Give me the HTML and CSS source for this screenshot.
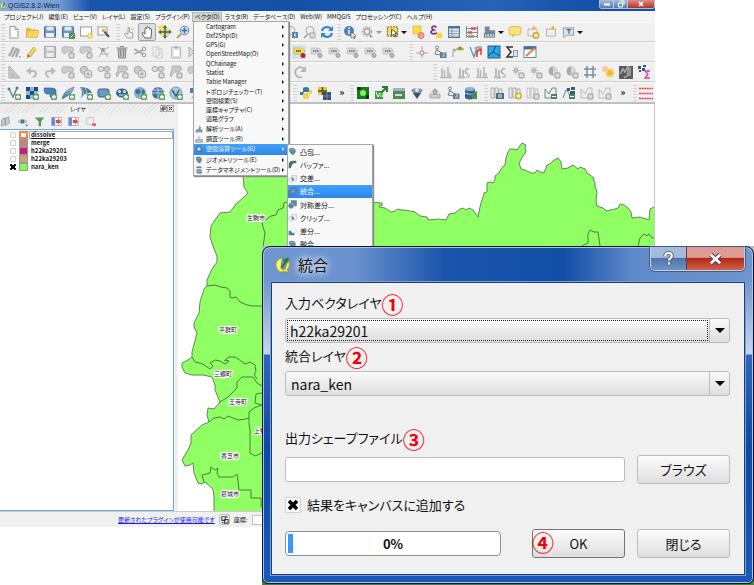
FILE: index.html
```html
<!DOCTYPE html>
<html lang="ja">
<head>
<meta charset="utf-8">
<title>QGIS2.8.2-Wien</title>
<link rel="stylesheet" href="styles.css">
</head>
<body>
<svg class="defs" aria-hidden="true">
  <defs>
    <g id="plus"><rect x="8" y="8" width="6" height="6" rx="1" fill="#5fa65f"/><path d="M11 9v4M9 11h4" stroke="#fff" stroke-width="1.3"/></g>
    <g id="gbadge"><rect x="8" y="8" width="5" height="5" rx="1" fill="#ddd" stroke="#999"/></g>
    <linearGradient id="bar" x1="0" y1="0" x2="0" y2="1"><stop offset="0" stop-color="#a9c4e2"/><stop offset="1" stop-color="#3f6fa5"/></linearGradient>
  </defs>
  <symbol id="new" viewBox="0 0 14 14"><path d="M3 1.500h5l3 3v8.500H3z" fill="#fff" stroke="#999"/><path d="M8 1.500v3h3" fill="none" stroke="#999"/></symbol>
  <symbol id="open" viewBox="0 0 14 14"><path d="M1 12V3h4l1 1.500h6V6" fill="#e8b93a"/><path d="M1 12.500L3 5.500h11L12 12.500z" fill="#fbd45c" stroke="#d9a52c" stroke-width=".6"/></symbol>
  <symbol id="save" viewBox="0 0 14 14"><rect x="1.500" y="1.500" width="11" height="11" rx="1" fill="#6f95bd" stroke="#4f7092"/><rect x="3.500" y="1.500" width="7" height="4" fill="#dfe9f2"/><rect x="3" y="8" width="8" height="4.500" fill="#eee"/></symbol>
  <symbol id="saveas" viewBox="0 0 14 14"><rect x="1.500" y="1.500" width="11" height="11" rx="1" fill="#6f95bd" stroke="#4f7092"/><rect x="3.500" y="1.500" width="7" height="4" fill="#dfe9f2"/><rect x="3" y="8" width="5" height="4.500" fill="#eee"/><rect x="8" y="8" width="6" height="6" fill="#4f8f4f"/><path d="M9.500 12.500l3-3" stroke="#fff"/></symbol>
  <symbol id="compose" viewBox="0 0 14 14"><rect x="1.500" y="2" width="11" height="9" fill="#fff" stroke="#999"/><circle cx="11" cy="11" r="2.800" fill="#f1c637"/><path d="M11 9.500v3M9.500 11h3" stroke="#fff"/></symbol>
  <symbol id="wrench" viewBox="0 0 14 14"><rect x="1" y="2" width="9" height="8" fill="#fff" stroke="#999"/><path d="M7 6l5 6" stroke="#555" stroke-width="2"/><circle cx="6.500" cy="5.500" r="1.800" fill="#d8b34c"/></symbol>
  <symbol id="touch" viewBox="0 0 14 14"><path d="M5 13L2.500 9l1-1L6 9V2.500h1.500V7l3.500 1-.5 5z" fill="#eee" stroke="#999" stroke-width=".9"/><path d="M9 4h3" stroke="#aaa"/></symbol>
  <symbol id="hand" viewBox="0 0 14 14"><path d="M4 13L.8 8.500l1.200-1 2 1.500V3.500q.8-1 1.600 0V2q.8-1 1.600 0v1q.8-1 1.600 0v1.200q.8-1 1.700 0V9l-.7 4z" fill="#fff" stroke="#555" stroke-width=".9" transform="translate(1)"/></symbol>
  <symbol id="pan" viewBox="0 0 14 14"><path d="M0 1l6-1 7 5-3 7-8-1z" fill="#f5dc53"/><path d="M7 2v10M2 7h10" stroke="#345f91" stroke-width="1.500"/><path d="M5 3l2-3 2 3zM5 11l2 3 2-3zM3 5L0 7l3 2zM11 5l3 2-3 2z" fill="#345f91"/></symbol>
  <symbol id="zoom" viewBox="0 0 14 14"><path d="M5 9l-4 4" stroke="#c7a04c" stroke-width="2"/><circle cx="8.500" cy="5.500" r="4.300" fill="#d3e5f4" stroke="#5d87b3"/><path d="M8.500 2.500v6M5.500 5.500h6" stroke="#3c6da5" stroke-width="1.500"/></symbol>
  <symbol id="zoomg" viewBox="0 0 14 14"><path d="M6 9l-4 4" stroke="#999" stroke-width="1.500"/><circle cx="8" cy="5.500" r="4" fill="#eee" stroke="#aaa"/><rect x="8" y="8" width="5" height="5" fill="#d8d8d8" stroke="#aaa"/></symbol>
  <symbol id="zoomb" viewBox="0 0 14 14"><circle cx="7" cy="5.500" r="4" fill="#eee" stroke="#aaa"/><rect x="8" y="7" width="6" height="6" fill="#5684b5"/><path d="M12 8.500l-2 1.500 2 1.500" stroke="#fff" fill="none"/></symbol>
  <symbol id="refresh" viewBox="0 0 14 14"><path d="M2 6a5 4.500 0 0 1 9-2M12 8a5 4.500 0 0 1-9 2" fill="none" stroke="#3b84cf" stroke-width="2.200"/><path d="M13 1v5H8zM1 13V8h5z" fill="#3b84cf"/></symbol>
  <symbol id="info" viewBox="0 0 14 14"><circle cx="6" cy="6" r="5" fill="#4d82b6"/><path d="M6 5v4M6 2.500v1.500" stroke="#fff" stroke-width="1.500"/><path d="M8 7l5 4-2 .3 1 2-1 .5-1-2-2 1z" fill="#fff" stroke="#333" stroke-width=".6"/></symbol>
  <symbol id="gear" viewBox="0 0 14 14"><circle cx="6.500" cy="6.500" r="4.500" fill="none" stroke="#bbb" stroke-width="2.500" stroke-dasharray="2 1.200"/><circle cx="6.500" cy="6.500" r="3" fill="none" stroke="#aaa" stroke-width="1.500"/><path d="M9 9l4 3-3 1z" fill="#999"/></symbol>
  <symbol id="select" viewBox="0 0 14 14"><rect x="1.500" y="1.500" width="11" height="10" fill="#f8df4d" stroke="#555" stroke-dasharray="2 1"/><path d="M6 4l6 4.500-2.500.3 1.500 3-1.300.7-1.500-3L6 11z" fill="#fff" stroke="#222" stroke-width=".8"/></symbol>
  <symbol id="desel" viewBox="0 0 14 14"><rect x="2" y="1" width="8" height="8" fill="#f8df3d" stroke="#d9b930" stroke-width=".7"/><circle cx="10" cy="10.500" r="3" fill="#f7d5d1" stroke="#da5b50"/><path d="M8.500 9l3 3m0-3l-3 3" stroke="#da5b50"/></symbol>
  <symbol id="eps" viewBox="0 0 14 14"><path d="M8 8h5v5H7z" fill="#f6d835"/><path d="M7.500 2.500C5-.5 0 3 5 5-.5 6 2 10.500 8 8" fill="none" stroke="#7c3c84" stroke-width="1.700"/></symbol>
  <symbol id="table" viewBox="0 0 14 14"><rect x="1.500" y="1.500" width="11" height="11" fill="#e8f0f6" stroke="#53748f"/><path d="M1 2.500h12" stroke="#53748f" stroke-width="2"/><path d="M1.500 6h11M1.500 8.500h11M1.500 11h11M5 3v9" stroke="#7d9ab2"/></symbol>
  <symbol id="abacus" viewBox="0 0 14 14"><path d="M1.500 1v12M12.500 1v12M1 3.500h12M1 7.500h12M1 11.500h12" stroke="#888" fill="none"/><path d="M6 3.500h5M3 7.500h4" stroke="#d9515c" stroke-width="2.500"/><path d="M3 11.500h6" stroke="#79a37c" stroke-width="2.500"/></symbol>
  <symbol id="measure" viewBox="0 0 14 14"><path d="M2 1h5v4h6v3H2z" fill="#73879a"/><rect x="1.500" y="8.500" width="11" height="4" fill="#c8d5df" stroke="#657a8c"/><path d="M4 9v2m3-2v2m3-2v2" stroke="#555"/></symbol>
  <symbol id="bubble" viewBox="0 0 14 14"><rect x="1" y="1.500" width="12" height="8.500" rx="2.500" fill="#f9e27a" stroke="#d0b44c" stroke-width=".8"/><path d="M4 10v3l4-3z" fill="#e6c858"/></symbol>
  <symbol id="bmnew" viewBox="0 0 14 14"><path d="M2 4h9v7H2z" fill="#eee" stroke="#b5b5b5"/><path d="M8 1l1.500 3H6.500z" fill="#edb72d" stroke="#edb72d"/><circle cx="10" cy="10.500" r="2.700" fill="#f9eec5" stroke="#d0a62f" stroke-width="1.500"/></symbol>
  <symbol id="bm" viewBox="0 0 14 14"><path d="M2.500 4h9v7h-9z" fill="#eee" stroke="#b5b5b5"/><path d="M9 1l1.500 3h-3z" fill="#edb72d" stroke="#edb72d"/></symbol>
  <symbol id="note" viewBox="0 0 14 14"><path d="M1.500 2.500h11v8H5L2 13V10.500h-.5z" fill="#dce4e9" stroke="#8899a5"/><path d="M5 4.500h5M7.500 4.500V9" stroke="#465f72" stroke-width="1.200"/></symbol>
  <symbol id="pencils" viewBox="0 0 14 14"><path d="M2 11L7 2M5 12l5-9M9 12l3-8" stroke="#aaa" stroke-width="2.300"/><path d="M12 12h2" stroke="#888"/></symbol>
  <symbol id="pencil" viewBox="0 0 14 14"><path d="M4 11l6-8" stroke="#c9a637" stroke-width="4"/><path d="M4 11l6-8" stroke="#f5dc62" stroke-width="2.300"/><path d="M2 13l.5-4 3 2.300z" fill="#776"/></symbol>
  <symbol id="saveg" viewBox="0 0 14 14"><rect x="1.500" y="1.500" width="11" height="11" fill="#c4c4c4" stroke="#aaa"/><rect x="3.500" y="2" width="7" height="3.500" fill="#eee"/><rect x="3.500" y="8" width="7" height="4" fill="#eee"/></symbol>
  <symbol id="blob" viewBox="0 0 14 14"><path d="M1 5c0-5 4-3 7-3 5-1 6 4 3 5-3 1-3-2-5 0-3 3-5 1-5-2z" fill="#ccc" stroke="#aaa" stroke-width=".8"/><use href="#gbadge"/></symbol>
  <symbol id="rings" viewBox="0 0 14 14"><ellipse cx="4" cy="4" rx="3" ry="2.500" fill="#ddd" stroke="#aaa"/><ellipse cx="10" cy="4" rx="3" ry="2.500" fill="#d0d0d0" stroke="#aaa"/><use href="#gbadge"/></symbol>
  <symbol id="merge" viewBox="0 0 14 14"><path d="M3 1h8l2 3-3 3H5l-3 5-1-3 2-4z" fill="#c8c8c8" stroke="#a8a8a8" stroke-width=".8"/><use href="#gbadge"/></symbol>
  <symbol id="circles" viewBox="0 0 14 14"><circle cx="5" cy="5" r="3.800" fill="#ccc" stroke="#aaa"/><circle cx="9" cy="9" r="4" fill="#ddd" stroke="#aaa"/><circle cx="9" cy="9" r="1.500" fill="#aaa"/></symbol>
  <symbol id="node" viewBox="0 0 14 14"><path d="M1 2l5 3 6-3M6 5L2 12M6 5l5 7M4 9h8" stroke="#aaa" fill="none"/><circle cx="6" cy="5" r="2" fill="#999"/></symbol>
  <symbol id="trash" viewBox="0 0 14 14"><path d="M3 4h8l-.7 9H3.700z" fill="#bbb" stroke="#888"/><path d="M1.500 3h11M5 1.500h4M5.500 5v6.500M8.500 5v6.500" stroke="#888"/></symbol>
  <symbol id="cut" viewBox="0 0 14 14"><path d="M1 4l9 5M1 9l9-4" stroke="#aaa" stroke-width="1.500"/><circle cx="11" cy="4" r="1.800" fill="none" stroke="#999"/><circle cx="11" cy="10" r="1.800" fill="none" stroke="#999"/></symbol>
  <symbol id="copy" viewBox="0 0 14 14"><path d="M2 2h6v9H2zM5 4h6v9H5z" fill="#f7f7f7" stroke="#c8c8c8"/><path d="M7 7h3M7 9h3" stroke="#ccc"/></symbol>
  <symbol id="paste" viewBox="0 0 14 14"><path d="M2.500 2h9v11h-9z" fill="#e5e5e5" stroke="#bbb"/><path d="M5 1.500h4v2H5z" fill="#aaa"/><path d="M5 5h5v6H5z" fill="#fff"/></symbol>
  <symbol id="tri" viewBox="0 0 14 14"><path d="M2 2v10L12 2v10L2 2z" fill="#ddd" stroke="#aaa"/></symbol>
  <symbol id="abc" viewBox="0 0 14 14"><rect width="14" height="14" fill="#cfe2f5"/><path d="M2 3h8l3 3-3 3H2z" fill="#f6dd5b" stroke="#c8ad39" stroke-width=".7"/><path d="M4 6h5" stroke="#665d2b" stroke-dasharray="1.500 .6" stroke-width="2"/><circle cx="11" cy="10.500" r="2.500" fill="#bd2532"/></symbol>
  <symbol id="abcg" viewBox="0 0 14 14"><path d="M1 3h8l3 3-3 3H1z" fill="#d7d7d7" stroke="#bbb" stroke-width=".7"/><path d="M3 6h6" stroke="#888" stroke-dasharray="1.500 .6" stroke-width="2"/><circle cx="10" cy="10.500" r="2" fill="#bbb" stroke="#999"/></symbol>
  <symbol id="target" viewBox="0 0 14 14"><path d="M7 1v12M1 8h12" stroke="#aaa"/><circle cx="7" cy="8" r="2" fill="#fff" stroke="#b46c6c"/></symbol>
  <symbol id="link" viewBox="0 0 14 14"><circle cx="4" cy="2.500" r="1.500" fill="none" stroke="#888"/><path d="M4 4L2 9l6 1M4 5l5 3" stroke="#777" fill="none"/><rect x="7" y="7.500" width="6.500" height="5.500" fill="#5d7f96"/><path d="M9 11h3M10 9h2" stroke="#dde"/></symbol>
  <symbol id="lamp" viewBox="0 0 14 14"><path d="M2 12V6l8-4" stroke="#999" fill="none"/><path d="M5 4h8" stroke="#c8bd48" stroke-width="2.500"/><circle cx="9" cy="3.500" r="2" fill="#8a9554"/><path d="M2 4l3 2" stroke="#aaa" stroke-width="2"/></symbol>
  <symbol id="vflag" viewBox="0 0 14 14"><path d="M1 2l4 10 3-10h5" stroke="#558ab5" fill="none" stroke-width="1.200"/><path d="M5 3h6l-4 8" stroke="#999" fill="none"/><path d="M8 12V6l4-2v6" stroke="#d53b3b" fill="none" stroke-width="1.500"/></symbol>
  <symbol id="bluenode" viewBox="0 0 14 14"><rect x="1" y="1" width="12" height="12" fill="#2ba7ec" stroke="#2c5e82"/><path d="M9 1L6 7l7 4M6 7l-5 4" stroke="#124b77" fill="none"/></symbol>
  <symbol id="sigma" viewBox="0 0 14 14"><path d="M8 2H2l4 5-4 5h6" fill="none" stroke="#333" stroke-width="1.500"/><rect x="8.500" y="5.500" width="4" height="6" fill="#dfe5f5" stroke="#8894b0"/></symbol>
  <symbol id="winpen" viewBox="0 0 14 14"><rect x="1" y="1.500" width="12" height="11" fill="#fff" stroke="#5c89c1"/><path d="M1 3h12" stroke="#3f6fae" stroke-width="3"/><path d="M3 11L12 3" stroke="#e88a37" stroke-width="2.300"/></symbol>
  <symbol id="square" viewBox="0 0 14 14"><path d="M2 1v12h11zM5 8v3h3z" fill="#ccc" fill-rule="evenodd" stroke="#aaa"/></symbol>
  <symbol id="undo" viewBox="0 0 14 14"><path d="M3 6h5c4 0 4 5 0 6" fill="none" stroke="#bbb" stroke-width="2"/><path d="M1 6l5-4v8z" fill="#bbb"/></symbol>
  <symbol id="redo" viewBox="0 0 14 14"><path d="M11 6H6c-4 0-4 5 0 6" fill="none" stroke="#bbb" stroke-width="2"/><path d="M13 6L8 2v8z" fill="#bbb"/></symbol>
  <symbol id="rotate" viewBox="0 0 14 14"><path d="M11 4a5 5 0 1 0-2 8" fill="none" stroke="#b5b5b5" stroke-width="1.700"/><path d="M13 1v6H7z" fill="#b5b5b5"/></symbol>
  <symbol id="hist" viewBox="0 0 14 14"><path d="M1 12.500h12M3 12V3M5.500 12V5M9 12V2M11 12V8" stroke="#bbb" stroke-width="1.700"/></symbol>
  <symbol id="hist2" viewBox="0 0 14 14"><path d="M1 12.500h7M3 12V3M6 12V5" stroke="#bbb" stroke-width="2"/><path d="M12 4c-4-1-5 4-1 5" fill="none" stroke="#aaa" stroke-width="1.500"/><path d="M9 12h3V9" stroke="#aaa" fill="none"/></symbol>
  <symbol id="sun" viewBox="0 0 14 14"><path d="M5 1v9M1 5.500h9M2 2l6 6M8 2L2 8" stroke="#c4c4c4"/><circle cx="5" cy="5.500" r="2.500" fill="#bbb"/><use href="#gbadge"/></symbol>
  <symbol id="ball" viewBox="0 0 14 14"><circle cx="6" cy="6" r="4.500" fill="#aaa"/><path d="M6 1.500a4.500 4.500 0 0 1 0 9z" fill="#d6d6d6"/><use href="#gbadge"/></symbol>
  <symbol id="gridic" viewBox="0 0 14 14"><path d="M4 1v12M10 1v12M1 4h12M1 10h12" stroke="#77909d" stroke-width="1.500"/></symbol>
  <symbol id="heat" viewBox="0 0 14 14"><circle cx="4" cy="4" r="3" fill="#f8c4a1"/><circle cx="9" cy="8" r="4.500" fill="#f5d45f"/><circle cx="9" cy="8" r="2.500" fill="#f1b13d"/></symbol>
  <symbol id="raster" viewBox="0 0 14 14"><rect width="14" height="13" y="1" fill="#5b5b5b"/><path d="M1 9l3-5 2 3 3-6v9l-4 3M11 2v9" stroke="#aaa" stroke-width="1.500" fill="none"/></symbol>
  <symbol id="zonal" viewBox="0 0 14 14"><path d="M1 1h3v3H1zM5 3h3v3H5zM2 5h2v2H2zM6 0h3v2H6z" fill="#2e5575"/><path d="M13 6H8l3 3.500L8 13h5" fill="none" stroke="#c4479e" stroke-width="1.300"/></symbol>
  <symbol id="vplus" viewBox="0 0 14 14"><path d="M2 3l4 8 4-9" stroke="#57789a" fill="none" stroke-width="1.300"/><circle cx="2" cy="3" r="1.500" fill="#57789a"/><circle cx="10" cy="2" r="1.500" fill="#57789a"/><use href="#plus"/></symbol>
  <symbol id="checker" viewBox="0 0 14 14"><rect x="1" y="1" width="12" height="12" fill="#8db8df"/><path d="M1 1h4v4H1zM9 1h4v4H9zM5 5h4v4H5zM1 9h4v4H1z" fill="#1f4d7b"/><use href="#plus"/></symbol>
  <symbol id="elephant" viewBox="0 0 14 14"><path d="M1 2h8q4 0 4 3v3H9v3H7V8H4Q1 8 1 2z" fill="#4681b7" stroke="#2f5f8e" stroke-width=".6"/><use href="#plus"/></symbol>
  <symbol id="feather" viewBox="0 0 14 14"><path d="M1 13Q3 4 13 1 12 8 1 13z" fill="url(#bar)" stroke="#4b7298" stroke-width=".7"/><use href="#plus"/></symbol>
  <symbol id="fan" viewBox="0 0 14 14"><path d="M1 1q10 0 12 6-8-1-12 6 4-6 0-12z" fill="#49799f"/><path d="M2 2q5 5 1 9M6 2q3 3 1 7" stroke="#9fc2dc" fill="none"/><use href="#plus"/></symbol>
  <symbol id="box" viewBox="0 0 14 14"><rect x="1" y="3" width="11" height="8" rx="2" fill="#6b98c8" stroke="#365f8e"/><use href="#plus"/></symbol>
  <symbol id="oval" viewBox="0 0 14 14"><ellipse cx="7" cy="7" rx="6" ry="4.500" fill="#356799"/><circle cx="4.500" cy="5.500" r="1.500" fill="#d9e7f3"/><circle cx="9.500" cy="5.500" r="1.500" fill="#d9e7f3"/><path d="M4 9h4" stroke="#d9e7f3"/><use href="#plus"/></symbol>
  <symbol id="globe" viewBox="0 0 14 14"><circle cx="7" cy="7" r="6" fill="#83aed1"/><path d="M2 4l4-1 2 3-3 3-2-2zM9 3l3 2-1 4-2-1z" fill="#3e709c"/><use href="#plus"/></symbol>
  <symbol id="globe2" viewBox="0 0 14 14"><circle cx="7" cy="7" r="6" fill="#44749e"/><path d="M1 7h12M2 4h10M7 1v12" stroke="#bed4e5"/><use href="#plus"/></symbol>
  <symbol id="globev" viewBox="0 0 14 14"><circle cx="7" cy="7" r="6" fill="#a9c7df" stroke="#7596b1"/><path d="M3 4l4 6 3-6" fill="none" stroke="#315d85" stroke-width="1.500"/><use href="#plus"/></symbol>
  <symbol id="comma" viewBox="0 0 14 14"><path d="M3 13q5-3 4-6H3V2h8q2 8-8 11z" fill="#4b80b2"/></symbol>
  <symbol id="python" viewBox="0 0 14 14"><path d="M4 6V2q3-2 6 0v4H5L4 9H1V6z" fill="#3a75ab"/><path d="M10 8v4q-3 2-6 0V9l1-2h5V4h3v4z" fill="#f5d142"/></symbol>
  <symbol id="ygrid" viewBox="0 0 14 14"><path d="M1 1h9v8H1z" fill="#e4c93e"/><path d="M5.500 1v8M1 5h9" stroke="#554c1b" stroke-width="1.500"/><path d="M6 6h8v8H6z" fill="#34516f"/><path d="M10 6v8M6 10h8" stroke="#718daa"/></symbol>
  <symbol id="bug" viewBox="0 0 14 14"><rect x="1" y="1" width="12" height="12" fill="#147a1f"/><path d="M1 1h4v3H1zM10 9h3v4h-3z" fill="#083c11"/><circle cx="7" cy="7" r="3" fill="#80ef5c"/></symbol>
  <symbol id="gv" viewBox="0 0 14 14"><path d="M1 5h8v8H1z" fill="#3a9b36"/><path d="M2 6l2 5 2-4h3M6 10h3" stroke="#fff" fill="none"/><path d="M7 7l6-6M8 1h5v5" fill="none" stroke="#277a27" stroke-width="2"/></symbol>
  <symbol id="land" viewBox="0 0 14 14"><rect x="1" y="2" width="12" height="11" fill="#518c4f"/><path d="M1 2h12v3H1z" fill="#9ab4c4"/><path d="M3 8h7v2H3z" fill="#d6dfd0"/></symbol>
  <symbol id="shield" viewBox="0 0 14 14"><path d="M1 4q6-4 12 0l-6 8z" fill="#8392a2"/><path d="M3 7h8l-4 6z" fill="#355473"/><circle cx="7" cy="4" r="2" fill="#dce5ed"/></symbol>
  <symbol id="cloud" viewBox="0 0 14 14"><path d="M2 8h10v4H2z" fill="#ccc" stroke="#aaa"/><path d="M7 2l4 4H3zM5 6h4v3H5z" fill="#aaa"/></symbol>
  <symbol id="db" viewBox="0 0 14 14"><path d="M1 3v9q5 3 10 0V3z" fill="#34618e"/><ellipse cx="6" cy="3" rx="5" ry="2" fill="#8db1d3"/><path d="M1 7q5 3 10 0" stroke="#b7cfe3" fill="none"/><path d="M7 8l6-3v8H8z" fill="#4a8a58"/></symbol>
  <symbol id="mapb" viewBox="0 0 14 14"><path d="M1 2h3v10H1zM5 2h3v10H5zM9 3h3v9H9z" fill="#eee" stroke="#aaa"/><rect x="6" y="7" width="8" height="6" fill="#4b7180"/><path d="M8 9h4M8 11h4" stroke="#dee"/></symbol>
  <symbol id="mapy" viewBox="0 0 14 14"><path d="M1 2h3v10H1zM5 2h3v10H5zM9 3h3v9H9z" fill="#eee" stroke="#aaa"/><circle cx="10.500" cy="10" r="2.700" fill="#f8edbb" stroke="#d0ac35" stroke-width="1.500"/></symbol>
  <symbol id="mapg" viewBox="0 0 14 14"><path d="M1 2h3v10H1zM5 2h3v10H5zM9 3h3v9H9z" fill="#eee" stroke="#c3c3c3"/><use href="#gbadge"/></symbol>
  <symbol id="net" viewBox="0 0 14 14"><path d="M1 12V3l4 5 3-6h4v10z" fill="#e7eef1" stroke="#71889a"/><rect x="7" y="8" width="6" height="5" fill="#4e8267"/><path d="M8 10.500h4" stroke="#fff"/></symbol>
  <symbol id="net2" viewBox="0 0 14 14"><path d="M1 12l3-8h1l3 6" fill="none" stroke="#71889a"/><path d="M5 2h3v3H5zM9 1h4v3H9zM8 5h5v3H8z" fill="#315d70"/><rect x="7" y="8" width="6" height="5" fill="#4e8267"/><path d="M8 10.500h4" stroke="#fff"/></symbol>
  <symbol id="netg" viewBox="0 0 14 14"><path d="M1 12V3l4 5 3-6h4v10z" fill="#eee" stroke="#bbb"/><use href="#gbadge"/></symbol>
  <symbol id="lines" viewBox="0 0 14 14"><path d="M0 2.500h14M0 7.500h14M0 12.500h14" stroke="#e34553" stroke-width="1.500" stroke-dasharray="2 .6"/></symbol>
  <symbol id="layers" viewBox="0 0 14 14"><path d="M2 5l4-3v9l-4 2zM7 3l4-2 1 8-5 3z" fill="#ccc" stroke="#8795a0"/></symbol>
  <symbol id="eye" viewBox="0 0 14 14"><path d="M1 7q6-5 12 0-6 5-12 0z" fill="#ccd7e0" stroke="#9caab5"/><circle cx="7" cy="7" r="2.500" fill="#507899"/><path d="M11 11h3l-1.500 2z" fill="#222"/></symbol>
  <symbol id="funnel" viewBox="0 0 14 14"><path d="M1 2h12L9 7v6H6V7z" fill="#4e9b59"/><path d="M2 2.500h10" stroke="#85c486"/></symbol>
  <symbol id="expand" viewBox="0 0 14 14"><rect x="1" y="2" width="12" height="10" fill="#fff" stroke="#8fa7d0"/><rect x="1" y="2" width="4" height="10" fill="#5c8be0"/><path d="M6 5h3V3l4 4-4 4V9H6z" fill="#e14f42"/></symbol>
  <symbol id="remove" viewBox="0 0 14 14"><rect x="2" y="2" width="9" height="9" rx="1" fill="#eee" stroke="#bbb"/><path d="M9 11h5" stroke="#e0545c" stroke-width="3"/></symbol>
  <symbol id="geo" viewBox="0 0 14 14"><path d="M1 3q5-4 10 0 3 6-3 10-6-3-7-10z" fill="#678ba2"/><path d="M3 4h6" stroke="#9db8c8"/></symbol>
  <symbol id="buffer" viewBox="0 0 14 14"><path d="M1 13V6Q2 1 8 1h5v4H9Q6 6 6 9l-2 4z" fill="#51717a"/></symbol>
  <symbol id="inter" viewBox="0 0 14 14"><circle cx="5" cy="9" r="4" fill="#eee" stroke="#bcc8cf"/><rect x="6" y="2" width="7" height="8" fill="#e9eef1" stroke="#bcc8cf"/><path d="M6 5q4 1 3 5H6z" fill="#517b9b"/></symbol>
  <symbol id="union" viewBox="0 0 14 14"><path d="M5 1h8v8H9q-1 4-5 4-4-2-3-5 1-3 4-3z" fill="#6688a2" stroke="#4b6e89"/><path d="M6 5q4 1 3 4" fill="none" stroke="#b9cbd7"/></symbol>
  <symbol id="diff" viewBox="0 0 14 14"><path d="M1 6h4q0 4 5 3v4H1z" fill="#557c98"/><circle cx="9" cy="5" r="4" fill="#f8fafb" stroke="#cdd7dd"/></symbol>
  <symbol id="analysis" viewBox="0 0 14 14"><path d="M7 1l4 4-2 3h4v5H1V9l6-3z" fill="#708c9b"/><path d="M3 11h8M7 2v3" stroke="#d4dfe5"/></symbol>
  <symbol id="survey" viewBox="0 0 14 14"><path d="M7 1v8M4 5h6M1 8h12v5H1z" fill="#9cafb9" stroke="#8ba0ab"/><path d="M3 11h8" stroke="#eee"/></symbol>
  <symbol id="cog" viewBox="0 0 14 14"><circle cx="7" cy="7" r="4.500" fill="none" stroke="#566d84" stroke-width="3" stroke-dasharray="2.600 .9"/><circle cx="7" cy="7" r="3.500" fill="#cdd7dd" stroke="#667e91"/></symbol>
  <symbol id="data" viewBox="0 0 14 14"><path d="M1 1h9l3 3H4zM1 6h9l3 3H4zM1 10h11v3H4z" fill="#5f8196"/></symbol>
  <symbol id="qgis" viewBox="0 0 18 18"><path d="M3 13Q0 7 4 4 6 1 9 2l-1 5q-1 4 1 7l3-1 1-5 3-3q2 5-2 9l2 3-5-1q-5 2-8-2z" fill="#f0ea5b" stroke="#858c2e" stroke-width=".8"/><path d="M5 12q-1-5 2-8" fill="none" stroke="#fffcc0" stroke-width="1.500"/><path d="M15 1q2 2-2 6l-5 6-1-2 4-5-2-2z" fill="#267b3b"/></symbol>
</svg>

<main class="window">
  <header class="titlebar">
    <svg class="logo"><use href="#qgis"/></svg>
    <h1>QGIS2.8.2-Wien</h1>
    <div class="winctl"><button aria-label="最小化"><svg viewBox="0 0 10 8"><path d="M2 4.500h6" stroke="#fff" stroke-width="2"/></svg></button><button aria-label="最大化"><svg viewBox="0 0 10 8"><path d="M4 1h4v4M2.500 3h4v4h-4z" fill="none" stroke="#fff"/></svg></button><button class="x" aria-label="閉じる"><svg viewBox="0 0 10 8"><path d="M3 2l4 4m0-4L3 6" stroke="#fff" stroke-width="1.600"/></svg></button></div>
  </header>
  <nav class="menubar">
    <button>プロジェクト(J)</button><button>編集(E)</button><button>ビュー(V)</button><button>レイヤ(L)</button><button>設定(S)</button><button>プラグイン(P)</button><button class="open">ベクタ(O)</button><button>ラスタ(R)</button><button>データベース(D)</button><button>Web(W)</button><button>MMQGIS</button><button>プロセッシング(C)</button><button>ヘルプ(H)</button>
  </nav>

  <div class="toolbar row1">
    <div class="group"><button><svg><use href="#new"/></svg></button><button><svg><use href="#open"/></svg></button><button><svg><use href="#save"/></svg></button><button><svg><use href="#saveas"/></svg></button><button><svg><use href="#compose"/></svg></button><button><svg><use href="#wrench"/></svg></button></div>
    <div class="group"><button><svg><use href="#touch"/></svg></button><button class="pressed"><svg><use href="#hand"/></svg></button><button><svg><use href="#pan"/></svg></button><button><svg><use href="#zoom"/></svg></button><button><svg><use href="#zoom"/></svg></button><button><svg><use href="#zoom"/></svg></button><button><svg><use href="#zoom"/></svg></button><button><svg><use href="#zoom"/></svg></button><button><svg><use href="#zoomb"/></svg></button><button><svg><use href="#zoomb"/></svg></button><button><svg><use href="#zoomg"/></svg></button><button><svg><use href="#refresh"/></svg></button></div>
    <div class="group"><button><svg><use href="#info"/></svg></button><button class="drop dim"><svg><use href="#gear"/></svg></button><button class="drop"><svg><use href="#select"/></svg></button><button><svg><use href="#desel"/></svg></button><button><svg><use href="#eps"/></svg></button><button><svg><use href="#table"/></svg></button><button><svg><use href="#abacus"/></svg></button><button class="drop"><svg><use href="#measure"/></svg></button><button><svg><use href="#bubble"/></svg></button><button><svg><use href="#bmnew"/></svg></button><button><svg><use href="#bm"/></svg></button><button class="drop"><svg><use href="#note"/></svg></button></div>
  </div>
  <div class="toolbar row2">
    <div class="group"><button><svg><use href="#pencils"/></svg></button><button><svg><use href="#pencil"/></svg></button><button><svg><use href="#saveg"/></svg></button><button><svg><use href="#blob"/></svg></button><button><svg><use href="#blob"/></svg></button><button><svg><use href="#node"/></svg></button><button><svg><use href="#trash"/></svg></button><button><svg><use href="#cut"/></svg></button><button><svg><use href="#copy"/></svg></button><button><svg><use href="#paste"/></svg></button><button><svg><use href="#tri"/></svg></button></div>
    <div class="group"><button><svg><use href="#abc"/></svg></button><button><svg><use href="#abcg"/></svg></button><button><svg><use href="#abcg"/></svg></button><button><svg><use href="#abcg"/></svg></button><button><svg><use href="#abcg"/></svg></button><button><svg><use href="#abcg"/></svg></button></div>
    <div class="group"><button><svg><use href="#target"/></svg></button><button><svg><use href="#link"/></svg></button><button><svg><use href="#lamp"/></svg></button><button><svg><use href="#vflag"/></svg></button><button><svg><use href="#bluenode"/></svg></button><button><svg><use href="#sigma"/></svg></button><button><svg><use href="#winpen"/></svg></button></div>
  </div>
  <div class="toolbar row3">
    <div class="group"><button><svg><use href="#square"/></svg></button><button><svg><use href="#undo"/></svg></button><button><svg><use href="#redo"/></svg></button><button><svg><use href="#blob"/></svg></button><button><svg><use href="#circles"/></svg></button><button><svg><use href="#rings"/></svg></button><button><svg><use href="#merge"/></svg></button><button><svg><use href="#circles"/></svg></button><button><svg><use href="#rings"/></svg></button><button><svg><use href="#merge"/></svg></button><button><svg><use href="#blob"/></svg></button></div>
    <div class="group plain"><button><svg><use href="#rotate"/></svg></button></div>
    <div class="group"><button><svg><use href="#hist"/></svg></button><button><svg><use href="#hist2"/></svg></button><button><svg><use href="#hist"/></svg></button><button><svg><use href="#hist2"/></svg></button><button><svg><use href="#sun"/></svg></button><button><svg><use href="#sun"/></svg></button><button><svg><use href="#ball"/></svg></button><button><svg><use href="#ball"/></svg></button><button><svg><use href="#gridic"/></svg></button><button><svg><use href="#heat"/></svg></button><button><svg><use href="#raster"/></svg></button><button><svg><use href="#zonal"/></svg></button></div>
  </div>
  <div class="toolbar row4">
    <div class="group"><button><svg><use href="#vplus"/></svg></button><button><svg><use href="#checker"/></svg></button><button><svg><use href="#elephant"/></svg></button><button><svg><use href="#feather"/></svg></button><button><svg><use href="#fan"/></svg></button><button><svg><use href="#box"/></svg></button><button><svg><use href="#oval"/></svg></button><button><svg><use href="#globe"/></svg></button><button><svg><use href="#globe2"/></svg></button><button><svg><use href="#globev"/></svg></button><button><svg><use href="#comma"/></svg></button></div>
    <div class="group"><button><svg><use href="#python"/></svg></button><button><svg><use href="#ygrid"/></svg></button><button class="more">»</button></div>
    <div class="group"><button><svg><use href="#bug"/></svg></button><button><svg><use href="#gv"/></svg></button><button><svg><use href="#land"/></svg></button><button><svg><use href="#shield"/></svg></button><button><svg><use href="#cloud"/></svg></button><button><svg><use href="#link"/></svg></button><button><svg><use href="#db"/></svg></button></div>
    <div class="group"><button><svg><use href="#mapb"/></svg></button><button><svg><use href="#mapy"/></svg></button><button><svg><use href="#mapg"/></svg></button><i class="sep"></i><button><svg><use href="#net"/></svg></button><button><svg><use href="#net2"/></svg></button><button><svg><use href="#netg"/></svg></button><button><svg><use href="#netg"/></svg></button><button class="more">»</button></div>
    <div class="group"><button><svg><use href="#lines"/></svg></button></div>
  </div>

  <div class="work">
    <aside class="dock">
      <div class="dockhead"><h2>レイヤ</h2><div class="dockctl"><button aria-label="フロート"><svg viewBox="0 0 6 6"><path d="M2 1h3v3H2zM1 2.500h2.500V5H1z" fill="none" stroke="#333" stroke-width=".9"/></svg></button><button aria-label="閉じる"><svg viewBox="0 0 6 6"><path d="M1 1l4 4m0-4L1 5" stroke="#222" stroke-width="1.200"/></svg></button></div></div>
      <div class="docktools"><button><svg><use href="#layers"/></svg></button><button><svg><use href="#eye"/></svg></button><button><svg><use href="#funnel"/></svg></button><button><svg><use href="#expand"/></svg></button><button><svg><use href="#expand"/></svg></button><button><svg><use href="#remove"/></svg></button></div>
      <ul class="layers">
        <li><input type="checkbox" id="l1"><i class="sw hollow"></i><label for="l1" class="current">dissolve</label></li>
        <li><input type="checkbox" id="l2"><i class="sw brown"></i><label for="l2">merge</label></li>
        <li><input type="checkbox" id="l3"><i class="sw pink"></i><label for="l3">h22ka29201</label></li>
        <li><input type="checkbox" id="l4"><i class="sw tan"></i><label for="l4">h22ka29203</label></li>
        <li><input type="checkbox" id="l5" checked><i class="sw green"></i><label for="l5">nara_ken</label></li>
      </ul>
    </aside>
    <section class="canvas">
      <svg class="map" viewBox="178 104 476 407" preserveAspectRatio="xMinYMin slice">
        <path class="area" d="M243 160v15l1 12 4 6-5 5-6 5-7 9-10 1-5 7-4 6-1 11 4 12 3 7v6l-5 7-5 11v6l-3 3-4 13-1 11-5 10v4l3 6-5 19v5l-4 3-6 3v4l3 6 7 2 11 0 9 2 3 8v5l5 12-6 7-6-1-1 7 2 7-7 3-11 10v8l-3 7-6 10 3 6 5-1 3-2 1 10 4 10 4 1 3-2 8 7 1 8v20H660V206L654 207 650 209 649 220 640 217 632 218 631 212 628 208 624 205 620 204 618 208 615 209 606 211 603 208 597 206 596 200 597 192 595 186 595 182 593 180 594 178 590 175 587 173 585 169 580 167 578 169 573 165 568 168 562 169 561 162 558 158 554 160 550 164 547 165 544 173 540 172 537 170 535 173 531 173 525 170 521 169 519 163 523 156 526 152 525 148 526 145 522 143 519 147 517 150 513 149 510 149 508 152 506 158 505 165 501 169 499 173 495 176 495 180 493 183 490 182 487 183 487 192 484 193 483 197 481 203 480 207 478 217 473 210 469 208 466 210 463 208 460 209 455 213 449 214 446 220 438 219 428 220 427 217 420 216 415 212 405 210 401 210 398 209 395 211 391 212 385 208 379 207 380 205 382 206 382 203 368 202V160z"/>
        <path class="edge" d="M287 202l-3 1-1 5-5 2-2 5-5 1-4 3-5 3 1 5 2 6-1 7-1 7M207 286l8-1 6 2 6 1 3 3 0 6 2 1 4-1 4 5 7 3 6 1h9M192 357l3 5 8 2 7 5 3-3-3-3 5-3 5 1 5 3 4-3-4-1M224 361l5-4 6 0 6 4 4 3 5-2 5 3 1 7-2 2 3 5M220 402l8-5 9-9 0-6 5-5h11l4 6 5 3M262 393l-6 1-1 9 7 2M209 422l5-4 6-1 4 2 4-3 10 4 8-1 3-1 0-6 5-4 8-3M249 418l0 6 1 6v23l5 3 7-3M204 482l-2-7 8-2 1-6 4 3 3-2-1 5 2 4h14l4-3 1 7 1 9h12v8h10v9M582 246l6-3 0-9 2-4 4 2 4 0 2 14M638 246l2-8 4-4 3 2 2-2 2 3 4 2"/>
        <g class="names"><text x="256" y="220">生駒市</text><text x="228" y="332">平群町</text><text x="223" y="376">三郷町</text><text x="238" y="404">王寺町</text><text x="263" y="433">上牧町</text><text x="230" y="458">香芝市</text><text x="230" y="496">葛城市</text></g>
      </svg>
    </section>
  </div>
  <footer class="status"><a href="#">更新されたプラグインが使用可能です</a><button aria-label="範囲"><svg viewBox="0 0 10 10"><path d="M2 2h4v4H2zM5 5h4v4H5zM7 1l1 2M2 8l2 1" fill="none" stroke="#444" stroke-width="1.200"/></svg></button><label for="coord">座標:</label><input id="coord" type="text"></footer>
</main>

<div class="menu vector">
  <ul class="plainitems">
    <li>Cartogram</li><li>Dxf2Shp(D)</li><li>GPS(G)</li><li>OpenStreetMap(O)</li><li>QChainage</li><li>Statist</li><li>Table Manager</li><li>トポロジチェッカー(T)</li><li>空間検索(S)</li><li>座標キャプチャ(C)</li><li>道路グラフ</li>
  </ul>
  <ul class="iconitems">
    <li><svg><use href="#analysis"/></svg>解析ツール(A)</li><li><svg><use href="#survey"/></svg>調査ツール(R)</li><li class="on"><svg><use href="#cog"/></svg>空間演算ツール(G)</li><li><svg><use href="#geo"/></svg>ジオメトリツール(E)</li><li><svg><use href="#data"/></svg>データマネジメントツール(D)</li>
  </ul>
</div>
<ul class="menu sub">
  <li><svg><use href="#geo"/></svg>凸包...</li><li><svg><use href="#buffer"/></svg>バッファ...</li><li><svg><use href="#inter"/></svg>交差...</li><li class="on"><svg><use href="#union"/></svg>統合...</li><li><svg><use href="#union"/></svg>対称差分...</li><li><svg><use href="#inter"/></svg>クリップ...</li><li><svg><use href="#diff"/></svg>差分...</li><li><svg><use href="#geo"/></svg>融合...</li>
</ul>

<div class="backdrop">
<form class="dialog" onsubmit="return false">
  <header class="dtitle">
    <svg><use href="#qgis"/></svg><h2>統合</h2>
    <div class="dctl"><button type="button" aria-label="ヘルプ"><svg viewBox="0 0 16 16"><path d="M4.500 5.500c0-5 7.500-4.500 7 0-.3 2.300-3 2-3 4.500M8.500 12v2.500" fill="none" stroke="#46546d" stroke-width="4"/><path d="M4.500 5.500c0-5 7.500-4.500 7 0-.3 2.300-3 2-3 4.500M8.500 12v2.500" fill="none" stroke="#fff" stroke-width="2.300"/></svg></button><button type="button" class="x" aria-label="閉じる"><svg viewBox="0 0 16 16"><path d="M3 4l10 9m0-9l-10 9" stroke="#4c3a48" stroke-width="5"/><path d="M3 4l10 9m0-9l-10 9" stroke="#fff" stroke-width="3"/></svg></button></div>
  </header>
  <div class="client">
    <div class="lab"><label for="in">入力ベクタレイヤ</label><b class="num">①</b></div>
    <div class="combo focus"><select id="in"><option>h22ka29201</option></select><i></i></div>
    <div class="lab"><label for="un">統合レイヤ</label><b class="num">②</b></div>
    <div class="combo"><select id="un"><option>nara_ken</option></select><i></i></div>
    <div class="lab out"><label for="of">出力シェープファイル</label><b class="num">③</b></div>
    <div class="line file"><input id="of" type="text"><button type="button">ブラウズ</button></div>
    <div class="check"><input type="checkbox" id="add" checked><label for="add">結果をキャンバスに追加する</label></div>
    <div class="line actions"><div class="progress" role="progressbar" aria-valuenow="0">0%</div><span class="okwrap"><button class="ok">OK</button><b class="num">④</b></span><button type="button">閉じる</button></div>
  </div>
</form>
</div>
</body>
</html>
```
FILE: styles.css
```css
* { box-sizing: border-box; }
body {
  margin: 0;
  min-height: 100vh;
  background: #fff;
  color: #111;
  font: 6px/8px "Noto Sans CJK JP", "Noto Sans", sans-serif;
  font-feature-settings: "palt";
  overflow: hidden;
}
button, input, select { font: inherit; font-feature-settings: inherit; color: inherit; margin: 0; padding: 0; border: 0; background: none; border-radius: 0; }
h1, h2, ul { margin: 0; padding: 0; font: inherit; list-style: none; }
svg { display: block; }
.defs { position: absolute; width: 0; height: 0; }

/* main window */
.window { width: calc(100% - 99px); height: calc(100vh - 58px); display: flex; flex-direction: column; background: #f0f0f0; }
.titlebar { height: 11px; flex: none; display: flex; align-items: center; background: linear-gradient(90deg, #87aade, #7ba1da 56px, #1a55ad 90px, #1450a6 45%, #2563b8 75%, #1650a8 90%); }
.logo { width: 6px; height: 9px; }
.titlebar h1 { flex: 1; padding-left: 2px; font: 7px/11px "Liberation Sans", sans-serif; color: #14213c; }
.winctl { display: flex; align-self: flex-start; height: 9px; border: 1px solid #a9bcd9; border-top: 0; border-radius: 0 0 3px 3px; overflow: hidden; }
.winctl button { width: 14px; background: linear-gradient(#a7bedd, #5478b0); border-right: 1px solid #b9cae2; }
.winctl svg { width: 10px; height: 8px; margin: 0 auto; }
.winctl .x { width: 26px; border: 0; background: linear-gradient(#d99084, #b8301c); }

.menubar { height: 11px; flex: none; display: flex; align-items: center; padding-left: 1px; background: #f4f4f4; }
.menubar button { height: 10px; padding: 0 1px 0 2px; border: 1px solid transparent; line-height: 8px; white-space: nowrap; }
.menubar .open { background: #d6d6d6; border-color: #b4b4b4; }

.toolbar { height: 20px; flex: none; display: grid; border-bottom: 1px solid #cfcfcf; border-top: 1px solid #fafafa; overflow: hidden; }
.row1 { grid-template-columns: 115px 221px 1fr; }
.row2 { grid-template-columns: 285px 123px 1fr; }
.row3 { grid-template-columns: 286px 146px 1fr; }
.row4 { grid-template-columns: 292px 57px 134px 149px 1fr; height: 22px; border-bottom: 2px solid #bfbfbf; }
.group { display: flex; align-items: center; min-width: 0; }
.group::before { content: ""; width: 4px; height: 16px; background: repeating-linear-gradient(#d0d0d0 0 1px, transparent 1px 3px); border-left: 1px solid #f4f4f4; flex: none; }
.group.plain::before { background: none; }
.group button { width: 18px; height: 18px; flex: none; padding: 2px; }
.group svg { width: 14px; height: 14px; }
.group .pressed { background: #ddd; border: 1px solid #a5a5a5; border-radius: 2px; padding: 1px; }
.group .drop { width: 25px; display: flex; align-items: center; }
.group .drop::after { content: ""; border: 3px solid transparent; border-top-color: #111; border-bottom: 0; margin-left: 2px; }
.group .dim::after { border-top-color: #999; }
.group .more { padding: 0; font-size: 9px; line-height: 18px; font-weight: bold; }
.sep { width: 1px; height: 16px; background: #ccc; }

.work { flex: 1; min-height: 0; display: grid; grid-template-columns: 174px 1fr; column-gap: 4px; }
.dock { display: flex; flex-direction: column; min-height: 0; }
.dockhead { height: 9px; display: flex; align-items: center; background: repeating-linear-gradient(135deg, #e2e2e2 0 1px, #f0f0f0 1px 3px); }
.dockhead h2 { margin-left: 68px; padding: 0 2px; background: #f0f0f0; flex: none; }
.dockctl { margin-left: auto; display: flex; background: #f0f0f0; }
.dockctl button { width: 7px; height: 7px; border: 1px solid #aaa; }
.dockctl svg { width: 5px; height: 5px; }
.docktools { height: 16px; display: flex; align-items: center; }
.docktools button { width: 17px; }
.docktools svg { width: 11px; height: 11px; }
.layers { flex: 1; background: #fff; border: 1px solid #6aa5e6; border-left: 0; padding-top: 1px; display: flex; flex-direction: column; }
.layers li { height: 8px; display: flex; align-items: center; padding-left: 10px; }
.layers input, .check input { appearance: none; background: #f8f8f8; border: 1px solid #d2d2d2; border-radius: 1px; }
.layers input { width: 6px; height: 6px; }
.layers input:checked { border: 0; background: linear-gradient(45deg, transparent 35%, #000 35% 65%, transparent 65%), linear-gradient(-45deg, transparent 35%, #000 35% 65%, transparent 65%); }
.layers label { font-weight: bold; line-height: 8px; padding-left: 2px; }
.layers .current { flex: 1; text-decoration: underline; border: 1px solid #aaa; line-height: 6px; padding-left: 1px; }
.sw { width: 9px; height: 8px; margin: 0 1px 0 3px; border: 1px solid #999; }
.hollow { border: 2px solid #f0844b; background: #fff; }
.brown { background: #b98b80; }
.pink { background: #d01a6c; }
.tan { background: #c9a677; }
.green { background: #87f95d; }
.canvas { background: #fff; border-right: 1px solid #c5c5c5; min-width: 0; overflow: hidden; }
.map { width: 100%; height: 100%; }
.area { fill: #8fff64; stroke: #64855a; stroke-width: 1; }
.edge { fill: none; stroke: #4d7c3d; stroke-width: 1; }
.names text { font-size: 6px; text-anchor: middle; fill: #222; paint-order: stroke; stroke: #fff; stroke-width: 2px; }
.status { height: 16px; flex: none; display: flex; align-items: center; padding-left: 118px; border-top: 1px solid #ccc; white-space: nowrap; }
.status a { color: #1717e8; }
.status button { width: 11px; height: 11px; margin: 0 4px; border: 1px solid #bbb; border-radius: 2px; }
.status input { width: 120px; height: 10px; margin-left: 5px; background: #fff; border: 1px solid #c5c5c5; }

/* drop-down menus */
.menu { position: absolute; background: #f8f8f8; border: 1px solid #a6a6a6; box-shadow: 1px 1px 1px #888; white-space: nowrap; }
.menu ul, .sub { display: grid; grid-auto-rows: 1fr; }
.menu li { display: flex; align-items: center; padding-left: 12px; }
.menu li svg { width: 8px; height: 8px; margin: 0 3px 0 -11px; flex: none; }
.vector { left: 193px; top: 21px; width: 96px; }
.vector li::after { content: ""; border: 2px solid transparent; border-left-color: #111; border-right: 0; margin: 0 4px 0 auto; }
.plainitems { height: 102px; }
.iconitems { height: 51px; }
.sub { left: 287px; top: 144px; width: 86px; height: 108px; font-size: 7px; }
.sub li svg { width: 9px; height: 9px; margin: 0 3px 0 -12px; }
.menu .on { background: linear-gradient(#43a0fb, #2d87ea); color: #fff; }
.menu .on::after { border-left-color: #fff; }

/* dialog */
.backdrop { position: absolute; left: 262px; right: 0; top: 246px; bottom: 0; padding-bottom: 1px; background: linear-gradient(#b9b9b9 8px, #4d7c35 20px); }
.dialog {
  height: 100%;
  display: flex;
  flex-direction: column;
  padding: 0 8px 8px;
  border: 1px solid #0b1730;
  border-radius: 8px 8px 6px 6px;
  box-shadow: inset 0 0 0 1px #a9c3e8;
  background: linear-gradient(#6d93cd00 35px, #7499d1 36px, #c6d6ee 107px, #2d66bd 108px, #0d4aa5 200px, #1a59ba), linear-gradient(90deg, #7096d0, #6b92ce 90px, #1b55ab 180px, #124da6 300px, #5f89c8 370px, #6e95d0);
  font-size: 13px;
  line-height: 20px;
}
.dtitle { height: 35px; flex: none; display: flex; align-items: center; padding-left: 3px; }
.dtitle > svg { width: 17px; height: 18px; }
.dtitle h2 { margin-left: 7px; font-size: 15px; text-shadow: 0 0 6px #fff, 0 0 10px #fff; }
.dctl { margin-left: auto; align-self: flex-start; height: 24px; display: flex; border: 1px solid #c3d2e8; border-top: 0; border-radius: 0 0 5px 5px; overflow: hidden; box-shadow: 0 0 0 1px #435c87; }
.dctl button { width: 35px; background: linear-gradient(#a4bbdc 45%, #5274aa 50%, #6f92c4); }
.dctl svg { width: 15px; height: 15px; margin: 0 auto; }
.dctl .x { width: 58px; border-left: 1px solid #693748; background: linear-gradient(#dd9b92 45%, #b02a18 50%, #d0614b); }
.client { flex: 1; background: #f0f0f0; border: 1px solid #183d78; box-shadow: 0 0 0 1px #7da0d4; padding: 7px 14px 0 13px; }
.lab { height: 26px; margin-bottom: 2px; display: flex; align-items: center; }
.num { color: #f0000a; font-size: 22px; line-height: 22px; font-weight: 700; font-feature-settings: normal; }
.combo { height: 25px; display: flex; border: 1px solid #bdbdbd; border-radius: 3px; background: linear-gradient(#fafafa, #dedede); }
.combo select { flex: 1; appearance: none; padding-left: 4px; outline: 0; border: 1px solid transparent; font-size: 14px; }
.combo.focus select { border: 1px dotted #222; margin: 1px; padding-left: 2px; }
.combo i { width: 20px; border-left: 1px solid #bdbdbd; display: grid; place-items: center; }
.combo i::after { content: ""; border: 5px solid transparent; border-top-color: #000; border-bottom: 0; }
.lab.out { margin-top: 29px; }
.line { display: flex; align-items: center; }
.line button { width: 93px; height: 29px; border: 1px solid #bdbdbd; border-radius: 3px; background: linear-gradient(#fcfcfc, #dedede); }
.file { gap: 12px; margin-top: 4px; }
.file input { flex: 1; height: 25px; background: #fff; border: 1px solid #bdbdbd; border-radius: 3px; padding: 0 4px; }
.check { height: 20px; margin-top: 11px; display: flex; align-items: center; gap: 6px; }
.check input { width: 16px; height: 16px; }
.check input:checked { background: url("data:image/svg+xml,%3Csvg xmlns='http://www.w3.org/2000/svg' viewBox='0 0 14 14'%3E%3Cpath d='M3 3l8 8m0-8l-8 8' stroke='%23000' stroke-width='3.500'/%3E%3C/svg%3E") #f8f8f8; }
.actions { margin-top: 14px; }
.progress { flex: 1; margin-right: 31px; height: 25px; border: 1px solid #8f8f8f; border-radius: 4px; text-align: center; line-height: 23px; font-weight: bold; background: linear-gradient(#3a98fb, #3a98fb) 2px 2px / 5px 19px no-repeat #fff; }
.okwrap { position: relative; margin-right: 12px; }
.okwrap .ok { border-color: #757575; display: block; }
.okwrap .num { position: absolute; left: 0; top: 1px; }
```
